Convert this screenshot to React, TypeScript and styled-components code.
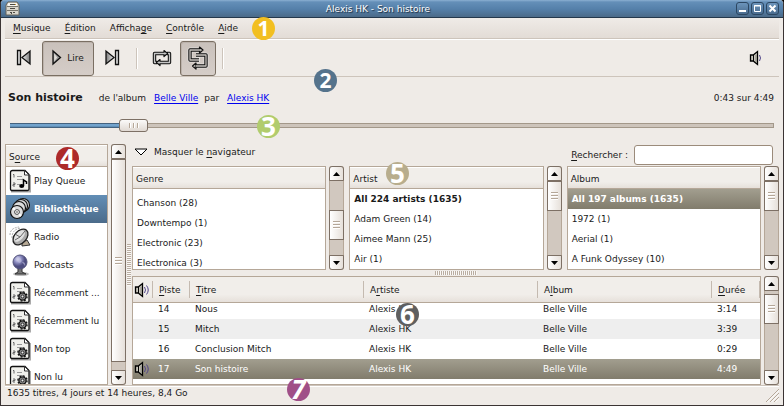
import React, { useState } from "react";
import styled, { createGlobalStyle, css } from "styled-components";

const c = {
  bg: "#efebe7",
  line: "#cdc4bb",
  edge: "#b5a798",
  dark: "#7d7065",
  text: "#1a1a1a",
};

const GlobalStyle = createGlobalStyle`
  * { box-sizing: border-box; }
  body { margin: 0; background: #000; }
  body, button, input, table {
    font-family: "DejaVu Sans", Verdana, sans-serif;
    font-size: 9px;
    line-height: 12px;
    color: ${c.text};
  }
  button { margin: 0; padding: 0; border: 0; background: none; white-space: nowrap; }
  u { text-underline-offset: 2px; }
  svg { display: block; flex: none; }
`;

const oliveFill = css`
  background: linear-gradient(#a29e8f, #817c6c);
  color: #fff;
`;

const Window = styled.div`
  position: relative;
  display: flex;
  flex-direction: column;
  height: 100vh;
  overflow: hidden;
  background: ${c.bg};
  border: solid #3b3434;
  border-width: 0 1px 1px;
  border-radius: 4px 4px 0 0;
`;

const TitleBar = styled.header`
  flex: none;
  display: grid;
  grid-template-columns: 1fr auto 1fr;
  align-items: center;
  height: 18px;
  padding: 0 4px;
  background: linear-gradient(#8bb0d2 0, #648fb8 2px, #5580aa 9px, #4b6a88 100%);
  border-bottom: 1px solid #24384c;
`;

const Title = styled.h1`
  margin: 0;
  padding-right: 28px;
  font-size: 9px;
  font-weight: normal;
  color: #fff;
  text-shadow: 1px 1px 1px #1c2b3a;
`;

const WindowButtons = styled.div`
  display: flex;
  justify-content: flex-end;
  gap: 2px;
`;

const WindowButton = styled.button`
  width: 13px;
  height: 13px;
  display: grid;
  place-items: center;
  border: 1px solid #2c4762;
  border-radius: 3px;
  background: linear-gradient(#6b94bb, #4a6c8f);
`;

const MenuBar = styled.nav`
  flex: none;
  display: flex;
  align-items: center;
  gap: 14px;
  height: 21px;
  margin: 0 4px;
  padding: 0 8px;
  background: linear-gradient(#efebe7, #e3dcd6);
  border-bottom: 1px solid ${c.line};
`;

const ToolBar = styled.div`
  flex: none;
  display: flex;
  align-items: center;
  height: 38px;
  margin: 0 4px;
  padding: 0 4px 0 1px;
  border-top: 1px solid #fff;
  border-bottom: 1px solid ${c.line};
`;

const ToolButton = styled.button<{ $pressed?: boolean; $wide?: boolean }>`
  display: flex;
  align-items: center;
  justify-content: center;
  gap: 5px;
  width: ${(p) => (p.$wide ? 52 : 36)}px;
  height: 35px;
  border-radius: 3px;
  ${(p) =>
    p.$pressed &&
    css`
      border: 1px solid #7a6f63;
      background: linear-gradient(#c9c1bb, #d5cdc8);
      box-shadow: inset 1px 1px 0 #bbb2ab;
    `}
`;

const ToolSeparator = styled.span`
  width: 2px;
  height: 21px;
  margin: 0 6px;
  border-left: 1px solid ${c.line};
  border-right: 1px solid #fff;
`;

const Spacer = styled.span`
  flex: 1;
`;

const NowPlaying = styled.section`
  flex: none;
  display: flex;
  align-items: center;
  height: 42px;
  padding: 0 9px 0 7px;
`;

const SongTitle = styled.strong`
  font-size: 11px;
  margin-right: 16px;
`;

const SongLink = styled.a`
  margin: 0 6px 0 8px;
  color: #0000ee;
  text-underline-offset: 2px;
`;

const Seek = styled.input`
  appearance: none;
  flex: none;
  align-self: stretch;
  height: 13px;
  margin: 0 9px 12px;
  background: none;

  &::-webkit-slider-runnable-track {
    height: 5px;
    background:
      linear-gradient(#44627f 1px, #72a3cd 1px 3px, #6190b8 3px 4px, #44627f 4px) 0 0 / 15% 100% no-repeat,
      linear-gradient(#a3988a 1px, #cdc4bb 1px 4px, #a3988a 4px);
    border: solid #a3988a;
    border-width: 0 1px 0 0;
  }

  &::-webkit-slider-thumb {
    appearance: none;
    width: 29px;
    height: 13px;
    margin-top: -4px;
    border: 1px solid #7d7065;
    border-radius: 3px;
    background:
      repeating-linear-gradient(90deg, #b5a798 0 1px, #fff 1px 2px, transparent 2px 4px) 50% 50% / 10px 5px no-repeat,
      linear-gradient(#fbfaf9, #e0d9d3);
  }
`;

const Main = styled.main`
  flex: 1;
  min-height: 0;
  display: flex;
  padding: 0 4px;
`;

const Panel = styled.section`
  flex: 1;
  min-width: 0;
  display: flex;
  flex-direction: column;
  overflow: hidden;
  background: #fff;
  border: 1px solid ${c.edge};
`;

const SourcePanel = styled(Panel)`
  flex: 0 0 103px;
  margin-right: 3px;
`;

const PanelHeader = styled.h2`
  flex: none;
  height: 22px;
  margin: 0;
  padding: 0 3px;
  font-size: 9px;
  font-weight: normal;
  line-height: 22px;
  background: linear-gradient(#f1eeea 70%, #e6e0da);
  border-top: 1px solid #fff;
  border-bottom: 1px solid ${c.edge};
`;

const SourceItem = styled.button<{ $selected?: boolean }>`
  flex: none;
  display: flex;
  align-items: center;
  gap: 3px;
  height: 28px;
  padding-left: 3px;
  text-align: left;
  ${(p) =>
    p.$selected &&
    css`
      background: linear-gradient(#628eb6, #4b6b8a);
      color: #fff;
      font-weight: bold;
    `}
`;

const Bar = styled.div`
  flex: none;
  display: flex;
  flex-direction: column;
  width: 15px;
  background: #d1c8bf;
  border-radius: 3px;
  box-shadow: inset 1px 0 #b5a798, inset -1px 0 #b5a798;
`;

const BarButton = styled.button<{ $down?: boolean }>`
  flex: none;
  height: 15px;
  display: grid;
  place-items: center;
  border: 1px solid ${c.dark};
  border-radius: ${(p) => (p.$down ? "0 0 3px 3px" : "3px 3px 0 0")};
  background: linear-gradient(90deg, #fff, #e6e0da);
`;

const Gap = styled.span<{ $grow: number }>`
  flex: ${(p) => p.$grow} 0 0;
`;

const Thumb = styled.span<{ $grow?: number }>`
  flex: ${(p) => (p.$grow ? `${p.$grow} 0 0` : "0 0 30px")};
  border: 1px solid ${c.dark};
  background:
    repeating-linear-gradient(#b5a798 0 1px, #fff 1px 2px, transparent 2px 3px) 50% 50% / 7px 8px no-repeat,
    linear-gradient(90deg, #fff, #e6e0da);
`;

const Grip = styled.span<{ $across?: boolean }>`
  flex: none;
  align-self: center;
  width: ${(p) => (p.$across ? 42 : 4)}px;
  height: ${(p) => (p.$across ? 4 : 42)}px;
  background: repeating-linear-gradient(
    ${(p) => (p.$across ? "90deg" : "180deg")},
    #b9ada1 0 1px,
    #faf8f6 1px 2px
  );
`;

const SplitColumn = styled.div`
  display: flex;
  width: 6px;
  justify-content: center;
`;

const SplitRow = styled.div`
  display: flex;
  flex: none;
  height: 6px;
  justify-content: center;
`;

const Content = styled.div`
  flex: 1;
  min-width: 0;
  display: flex;
  flex-direction: column;
`;

const FilterRow = styled.div`
  flex: none;
  display: flex;
  justify-content: space-between;
  height: 22px;
`;

const Toggle = styled.button`
  display: flex;
  align-items: center;
  gap: 6px;
  height: 16px;
  padding-left: 2px;
`;

const SearchLabel = styled.label`
  display: flex;
  align-items: center;
  gap: 6px;
  padding-right: 6px;
`;

const SearchInput = styled.input`
  width: 139px;
  height: 20px;
  padding: 0 4px;
  border: 1px solid #9b8b7b;
  border-radius: 3px;
  background: #fff;
`;

const Browser = styled.div`
  flex: none;
  display: flex;
  gap: 5px;
  height: 104px;
`;

const ListGroup = styled.div`
  flex: 1;
  min-width: 0;
  display: flex;
  gap: 3px;
`;

const ListBody = styled.ul<{ $inset?: boolean }>`
  margin: 0;
  padding: ${(p) => (p.$inset ? 4 : 0)}px 0 0;
  list-style: none;
`;

const ListItem = styled.li<{ $bold?: boolean; $selected?: boolean }>`
  padding: 4px;
  font-weight: ${(p) => (p.$bold ? "bold" : "normal")};
  ${(p) => p.$selected && oliveFill}
`;

const Tracks = styled.div`
  flex: 1;
  min-height: 0;
  display: flex;
  gap: 3px;
`;

const TrackTable = styled.table`
  width: 100%;
  table-layout: fixed;
  border-collapse: separate;
  border-spacing: 0;
`;

const HeadCell = styled.th`
  height: 26px;
  padding: 0 0 0 6px;
  text-align: left;
  font-weight: normal;
  border-bottom: 1px solid ${c.edge};
  background:
    linear-gradient(#c4bab0, #c4bab0) 100% 4px / 1px 17px no-repeat,
    linear-gradient(#f1eeea 70%, #e6e0da);

  &:first-child { padding: 0 0 0 1px; }
`;

const TrackRow = styled.tr<{ $selected?: boolean }>`
  &:nth-child(even) { background: #eeeeee; }
  &&:nth-child(n) { ${(p) => p.$selected && oliveFill} }
  &:first-child td { height: 16px; padding-bottom: 4px; }
`;

const Cell = styled.td`
  height: 20px;
  padding: 0 0 0 5px;
  overflow: hidden;
  white-space: nowrap;

  &:first-child { padding: 0 0 0 1px; }
`;

const Col = styled.col<{ $w?: number }>`
  width: ${(p) => (p.$w ? `${p.$w}px` : "auto")};
`;

const StatusBar = styled.footer`
  flex: none;
  display: flex;
  align-items: flex-start;
  justify-content: space-between;
  height: 20px;
  margin: 0 4px;
  padding: 1px 0 0 2px;
  border-top: 1px solid ${c.line};
  box-shadow: inset 0 1px #fff;
`;

const ResizeHandle = styled.svg`
  align-self: flex-end;
  margin-bottom: 3px;
`;

const Badge = styled.span<{ $x: number; $y: number; $color: string; $large?: boolean; $italic?: boolean }>`
  position: absolute;
  left: ${(p) => p.$x}px;
  top: ${(p) => p.$y}px;
  width: 23px;
  height: 23px;
  border-radius: 50%;
  background: ${(p) => p.$color};
  color: #fff;
  font-family: "Open Sans", "Noto Sans", sans-serif;
  font-size: ${(p) => (p.$large ? 26 : 21)}px;
  font-style: ${(p) => (p.$italic ? "italic" : "normal")};
  font-weight: 700;
  line-height: 23px;
  text-align: center;
  pointer-events: none;
`;

const CabinetIcon = () => (
  <svg width="15" height="15" viewBox="0 0 15 15">
    <path d="M3 1h9l2 3v10H1V4z" fill="#d9d6cc" stroke="#65625a" />
    <path d="M3 2h9v3H3z" fill="#f6f4ee" />
    <path d="M2 5.500h11M2 9.500h11" stroke="#77746b" />
    <path d="M5 3.500h5M5 7.500h5M5 11.500h2m1 0h2M6 12.500h1" stroke="#4b4943" />
    <path d="M10 3h1v1h-1z" fill="#cf9a30" />
  </svg>
);

const SkipIcon = ({ next }: { next?: boolean }) => (
  <svg width="16" height="18" viewBox="0 0 16 18">
    <defs>
      <linearGradient id="metal" x1="0" x2="1">
        <stop offset="0" stopColor="#f7f7f7" />
        <stop offset="1" stopColor="#777" />
      </linearGradient>
    </defs>
    <g transform={next ? "translate(16 0) scale(-1 1)" : undefined} stroke="#111" strokeWidth="1.300">
      <path d="M1.500 1.500h3v14h-3z" fill="#d8d8d8" />
      <path d="M14 2v13L6 8.500z" fill="url(#metal)" />
    </g>
  </svg>
);

const PlayIcon = () => (
  <svg width="10" height="18" viewBox="0 0 10 18">
    <path d="M1 2v13l7.500-6.500z" fill="#999" stroke="#111" strokeWidth="1.300" />
    <path d="M2.200 4.500v8l3-4z" fill="#e1ded9" />
  </svg>
);

const RepeatIcon = () => (
  <svg width="20" height="20" viewBox="0 0 20 20">
    <g fill="none" strokeLinejoin="round">
      <path d="M5 14.500H2.500V5.500H12M15 5.500h2.500v9H8" stroke="#111" strokeWidth="3.400" />
      <path d="M12 2.500l3.500 3-3.500 3zM8 11.500l-3.500 3 3.500 3z" fill="#c4c4c4" stroke="#111" strokeWidth="1.200" />
      <path d="M4 14.500H2.500V5.500H13M16 5.500h1.500v9H7" stroke="#c4c4c4" strokeWidth="1.300" />
    </g>
  </svg>
);

const ShuffleIcon = () => (
  <svg width="22" height="24" viewBox="0 0 22 24">
    <g fill="none" strokeLinejoin="round">
      <path d="M13 4H3v10h10M9 9h10v11H9" stroke="#eee" strokeWidth="5" opacity=".6" />
      <path d="M13 4H3v10h9M9 9h10v11H9" stroke="#111" strokeWidth="3.400" />
      <path d="M12.500 1l3.500 3-3.500 3zM9 17l-3.500 3L9 23z" fill="#c6c2be" stroke="#111" strokeWidth="1.200" />
      <path d="M13 4H3v10h9M9 9h10v11H9" stroke="#c6c2be" strokeWidth="1.300" />
    </g>
  </svg>
);

const SpeakerIcon = ({ waves = 2 }: { waves?: number }) => (
  <svg width="17" height="16" viewBox="0 0 17 16">
    <path d="M1.500 5h2.700L8.500 1.500v13L4.200 11H1.500z" fill="#c9c7bd" stroke="#000" strokeWidth="1.300" />
    <path d="M4.500 5v6" stroke="#000" />
    <path d="M7 5v7" stroke="#8d8a80" />
    <g fill="none" stroke="#514589">
      <path d="M10.500 5q2 3 0 6" />
      {waves > 1 && <path d="M12.500 3.500q3.500 4.500 0 9" />}
    </g>
  </svg>
);

const QueueIcon = ({ auto }: { auto?: boolean }) => (
  <svg width="22" height="24" viewBox="0 0 22 24">
    <path d="M2 22.500h19V6" fill="none" stroke="#aaa" strokeWidth="2" />
    <path d="M1.500 3.500q0-2 2-2H16L20 5.500V20q0 1.500-1.500 1.500h-15q-2 0-2-1.500z" fill="#f1f1ec" stroke="#111" strokeWidth="1.300" />
    <path d="M15.500 1.500v4.500H20z" fill="#fff" stroke="#333" />
    <path d="M4 5.500h1v3M4 14h2v1.500H4V17h2" fill="none" stroke="#666" />
    <path d="M8 7.500h5M8 10.500h6M8 15.500h3" stroke="#999" />
    {auto ? (
      <>
        <circle cx="13.500" cy="15.500" r="3.600" fill="#888" stroke="#111" strokeWidth="1.300" />
        <circle cx="13.500" cy="15.500" r="4.600" fill="none" stroke="#111" strokeWidth="1.300" strokeDasharray="1.800 1.810" />
        <circle cx="13.500" cy="15.500" r="1.400" fill="#eee" stroke="#111" strokeWidth=".8" />
      </>
    ) : (
      <>
        <path d="M14.500 17v-6l3 2v2" fill="none" stroke="#000" strokeWidth="1.500" />
        <ellipse cx="12.700" cy="17" rx="2.500" ry="1.900" fill="#000" />
      </>
    )}
  </svg>
);

const DiscsIcon = () => (
  <svg width="22" height="24" viewBox="0 0 22 24">
    {[
      [14, 8],
      [12, 9],
      [10, 11],
      [8, 15],
    ].map(([x, y]) => (
      <circle key={x} cx={x} cy={y} r="6.500" fill="#dcdcdc" stroke="#111" strokeWidth="1.200" />
    ))}
    <path d="M4 11l8 8" stroke="#fff" strokeWidth="2" />
    <circle cx="8" cy="15" r="2.400" fill="#fff" stroke="#444" />
    <circle cx="8" cy="15" r="0.800" fill="#333" />
  </svg>
);

const RadioIcon = () => (
  <svg width="22" height="24" viewBox="0 0 22 24">
    <g fill="none" stroke="#aaa" strokeDasharray="2 1">
      <path d="M1 10q0-7 9-8M3 13q0-9 9-10M5 14q-1-7 7-9" />
    </g>
    <path d="M13 17l5-2 3 5-8 1z" fill="#b5a894" stroke="#333" />
    <ellipse cx="11.500" cy="12" rx="9" ry="6" transform="rotate(-48 11.500 12)" fill="#aaa" stroke="#222" strokeWidth="1.300" />
    <ellipse cx="10.500" cy="11" rx="7" ry="3.800" transform="rotate(-48 10.500 11)" fill="#e1e1e1" />
    <path d="M6 9l5 3 5-6M11 12l-5 3" fill="none" stroke="#666" />
  </svg>
);

const PodcastIcon = () => (
  <svg width="22" height="24" viewBox="0 0 22 24">
    <defs>
      <radialGradient id="globe" cx=".35" cy=".3">
        <stop offset="0" stopColor="#e8e8fa" />
        <stop offset=".5" stopColor="#9090c4" />
        <stop offset="1" stopColor="#4d4d80" />
      </radialGradient>
    </defs>
    <ellipse cx="12" cy="21" rx="8" ry="2" fill="#bbb" />
    <path d="M9 15h4v4l4 2H6l3-2z" fill="#777" stroke="#333" />
    <circle cx="11" cy="9" r="7" fill="url(#globe)" stroke="#55557c" />
    <path d="M7 6q3-3 5 0t-2 4zM13 9q4 0 3 4" fill="#c0c0e0" opacity=".6" />
  </svg>
);

const sources = [
  { name: "Play Queue", icon: <QueueIcon /> },
  { name: "Bibliothèque", icon: <DiscsIcon /> },
  { name: "Radio", icon: <RadioIcon /> },
  { name: "Podcasts", icon: <PodcastIcon /> },
  { name: "Récemment ...", icon: <QueueIcon auto /> },
  { name: "Récemment lu", icon: <QueueIcon auto /> },
  { name: "Mon top", icon: <QueueIcon auto /> },
  { name: "Non lu", icon: <QueueIcon auto /> },
];

const lists = [
  { title: "Genre", items: ["Chanson (28)", "Downtempo (1)", "Electronic (23)", "Electronica (3)"], before: 30, after: 15 },
  { title: "Artist", all: true, items: ["All 224 artists (1635)", "Adam Green (14)", "Aimee Mann (25)", "Air (1)"], before: 0, after: 1 },
  { title: "Album", all: true, selected: 0, items: ["All 197 albums (1635)", "1972 (1)", "Aerial (1)", "A Funk Odyssey (10)"], before: 0, after: 1 },
];

const tracks = [
  [14, "Nous", "3:14"],
  [15, "Mitch", "3:39"],
  [16, "Conclusion Mitch", "0:29"],
  [17, "Son histoire", "4:49"],
];

const ScrollBar = ({ before, after, thumb }: { before: number; after: number; thumb?: number }) => (
  <Bar>
    <BarButton aria-label="Défiler vers le haut">
      <svg width="7" height="4" viewBox="0 0 7 4"><path d="M0 4l3.500-4L7 4z" /></svg>
    </BarButton>
    <Gap $grow={before} />
    <Thumb $grow={thumb} />
    <Gap $grow={after} />
    <BarButton $down aria-label="Défiler vers le bas">
      <svg width="7" height="4" viewBox="0 0 7 4"><path d="M0 0l3.500 4L7 0z" /></svg>
    </BarButton>
  </Bar>
);

export default function App() {
  const [position, setPosition] = useState(43);
  const [query, setQuery] = useState("");

  return (
    <>
      <GlobalStyle />
      <Window>
        <TitleBar>
          <CabinetIcon />
          <Title>Alexis HK - Son histoire</Title>
          <WindowButtons>
            <WindowButton aria-label="Réduire">
              <svg width="9" height="9"><path d="M1 7h7" stroke="#fff" strokeWidth="2" /></svg>
            </WindowButton>
            <WindowButton aria-label="Agrandir">
              <svg width="9" height="9"><path d="M1.500 1.500h6v6h-6zM1 2h7" fill="none" stroke="#fff" /></svg>
            </WindowButton>
            <WindowButton aria-label="Fermer">
              <svg width="9" height="9"><path d="M1.500 1.500l6 6m0-6l-6 6" stroke="#fff" strokeWidth="2" /></svg>
            </WindowButton>
          </WindowButtons>
        </TitleBar>

        <MenuBar>
          <button><u>M</u>usique</button>
          <button><u>É</u>dition</button>
          <button>Afficha<u>g</u>e</button>
          <button><u>C</u>ontrôle</button>
          <button><u>A</u>ide</button>
        </MenuBar>

        <ToolBar>
          <ToolButton aria-label="Précédent"><SkipIcon /></ToolButton>
          <ToolButton $pressed $wide><PlayIcon />Lire</ToolButton>
          <ToolButton aria-label="Suivant"><SkipIcon next /></ToolButton>
          <ToolSeparator />
          <ToolButton aria-label="Répéter"><RepeatIcon /></ToolButton>
          <ToolButton $pressed aria-label="Aléatoire"><ShuffleIcon /></ToolButton>
          <ToolSeparator />
          <Spacer />
          <ToolButton aria-label="Volume"><SpeakerIcon waves={1} /></ToolButton>
        </ToolBar>

        <NowPlaying>
          <SongTitle>Son histoire</SongTitle>
          de l'album
          <SongLink href="#album">Belle Ville</SongLink>
          par
          <SongLink href="#artiste">Alexis HK</SongLink>
          <Spacer />
          0:43 sur 4:49
        </NowPlaying>
        <Seek
          type="range"
          aria-label="Position"
          min={0}
          max={289}
          value={position}
          onChange={(e) => setPosition(Number(e.target.value))}
        />

        <Main>
          <SourcePanel>
            <PanelHeader>S<u>o</u>urce</PanelHeader>
            {sources.map((s, i) => (
              <SourceItem key={s.name} $selected={i === 1}>
                {s.icon}
                {s.name}
              </SourceItem>
            ))}
          </SourcePanel>
          <ScrollBar before={0} thumb={204} after={8} />
          <SplitColumn><Grip /></SplitColumn>

          <Content>
            <FilterRow>
              <Toggle>
                <svg width="14" height="8" viewBox="0 0 14 8"><path d="M1 1h12L7 7z" fill="#fff" stroke="#000" /></svg>
                <span>Masquer le <u>n</u>avigateur</span>
              </Toggle>
              <SearchLabel>
                <span><u>R</u>echercher :</span>
                <SearchInput value={query} onChange={(e) => setQuery(e.target.value)} />
              </SearchLabel>
            </FilterRow>

            <Browser>
              {lists.map((list) => (
                <ListGroup key={list.title}>
                  <Panel>
                    <PanelHeader>{list.title}</PanelHeader>
                    <ListBody $inset={!list.all}>
                      {list.items.map((item, i) => (
                        <ListItem key={item} $bold={list.all && i === 0} $selected={list.selected === i}>
                          {item}
                        </ListItem>
                      ))}
                    </ListBody>
                  </Panel>
                  <ScrollBar before={list.before} after={list.after} />
                </ListGroup>
              ))}
            </Browser>
            <SplitRow><Grip $across /></SplitRow>

            <Tracks>
              <Panel>
                <TrackTable>
                  <colgroup>
                    <Col $w={20} />
                    <Col $w={37} />
                    <Col />
                    <Col />
                    <Col />
                    <Col $w={48} />
                  </colgroup>
                  <thead>
                    <tr>
                      <HeadCell aria-label="Lecture"><SpeakerIcon /></HeadCell>
                      <HeadCell><u>P</u>iste</HeadCell>
                      <HeadCell><u>T</u>itre</HeadCell>
                      <HeadCell>A<u>r</u>tiste</HeadCell>
                      <HeadCell>A<u>l</u>bum</HeadCell>
                      <HeadCell><u>D</u>urée</HeadCell>
                    </tr>
                  </thead>
                  <tbody>
                    {tracks.map(([n, title, time]) => (
                      <TrackRow key={n} $selected={n === 17}>
                        <Cell>{n === 17 && <SpeakerIcon />}</Cell>
                        <Cell>{n}</Cell>
                        <Cell>{title}</Cell>
                        <Cell>Alexis HK</Cell>
                        <Cell>Belle Ville</Cell>
                        <Cell>{time}</Cell>
                      </TrackRow>
                    ))}
                  </tbody>
                </TrackTable>
              </Panel>
              <ScrollBar before={3} after={47} />
            </Tracks>
          </Content>
        </Main>

        <StatusBar>
          <span>1635 titres, 4 jours et 14 heures, 8,4 Go</span>
          <ResizeHandle width="13" height="13" viewBox="0 0 13 13">
            <path d="M0 13L13 0M4 13l9-9M8 13l5-5" stroke="#b5a798" />
            <path d="M1 13.500L13.500 1M5 13.500l8.500-8.500M9 13.500l5-5" stroke="#fff" />
          </ResizeHandle>
        </StatusBar>

        <Badge $x={251} $y={17} $color="#f2bf20">1</Badge>
        <Badge $x={313} $y={69} $color="#55738c">2</Badge>
        <Badge $x={256} $y={115} $color="#b1cc6d" $large>3</Badge>
        <Badge $x={55} $y={147} $color="#ad2a2a" $large>4</Badge>
        <Badge $x={385} $y={162} $color="#b8ad8d" $large>5</Badge>
        <Badge $x={395} $y={303} $color="#5f5f5f" $large>6</Badge>
        <Badge $x={286} $y={378} $color="#a04f88" $large $italic>7</Badge>
      </Window>
    </>
  );
}
